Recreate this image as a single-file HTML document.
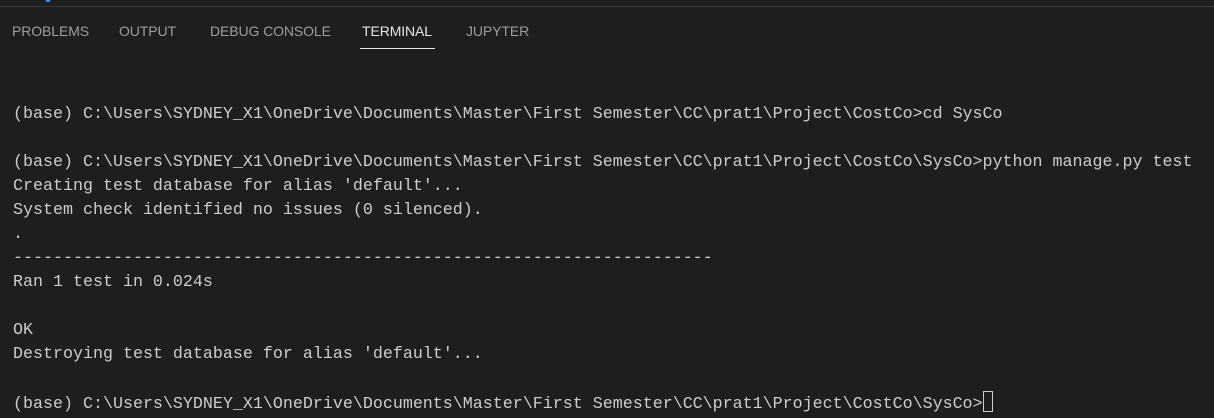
<!DOCTYPE html>
<html><head><style>
body{margin:0;width:1214px;height:418px;background:#1e1e1e;overflow:hidden;position:relative;font-family:"Liberation Sans",sans-serif}
.top{position:absolute;left:0;top:0;width:1214px;height:6px;background:#1e1e1e;border-bottom:1px solid #3c3c3c}
.tab{position:absolute;top:23px;font-size:14px;color:#9d9d9d;letter-spacing:-0.1px}
.act{color:#e7e7e7}
.ul{position:absolute;left:360px;top:48px;width:75px;height:1px;background:#e7e7e7}
pre{position:absolute;left:13px;top:103px;margin:0;font-family:"Liberation Mono",monospace;font-size:16.67px;line-height:24px;color:#cccccc}
.cur{display:inline-block;width:8px;height:19px;border:1px solid #ccc;vertical-align:-4px}
</style></head><body>
<div class="top"></div>
<div style="position:absolute;left:46px;top:0;width:4px;height:2px;background:#3794ff"></div>
<div class="tab" style="left:12px">PROBLEMS</div>
<div class="tab" style="left:119px">OUTPUT</div>
<div class="tab" style="left:210px">DEBUG CONSOLE</div>
<div class="tab act" style="left:362px">TERMINAL</div>
<div class="tab" style="left:466px">JUPYTER</div>
<div class="ul"></div>
<pre>(base) C:\Users\SYDNEY_X1\OneDrive\Documents\Master\First Semester\CC\prat1\Project\CostCo>cd SysCo

(base) C:\Users\SYDNEY_X1\OneDrive\Documents\Master\First Semester\CC\prat1\Project\CostCo\SysCo>python manage.py test
Creating test database for alias 'default'...
System check identified no issues (0 silenced).
.
----------------------------------------------------------------------
Ran 1 test in 0.024s

OK
Destroying test database for alias 'default'...

(base) C:\Users\SYDNEY_X1\OneDrive\Documents\Master\First Semester\CC\prat1\Project\CostCo\SysCo><span class="cur"></span></pre>
</body></html>
